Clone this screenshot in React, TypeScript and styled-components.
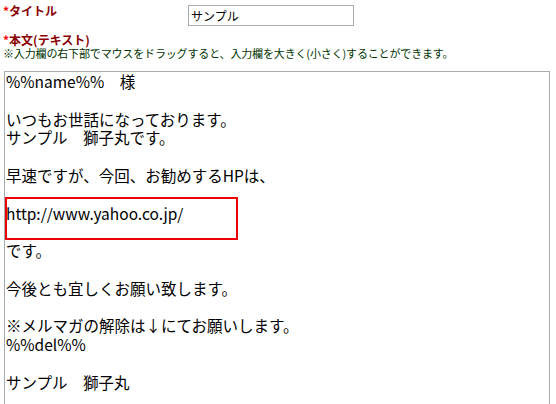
import { createGlobalStyle, styled } from 'styled-components';

const GlobalStyle = createGlobalStyle`
    html, body {
        margin: 0;
        padding: 0;
        background: #ffffff;
    }
    body {
        font-family: "Noto Sans CJK JP", "Noto Sans", sans-serif;
        overflow: hidden;
        height: 404px;
    }
`;

const Form = styled.div`
    padding: 4px 0 0 3px;
    width: 547px;
`;

const FieldRow = styled.div`
    display: grid;
    grid-template-columns: 185px 166px;
    align-items: start;
    height: 29px;
`;

const Label = styled.div`
    font-size: 12px;
    line-height: 14px;
    font-weight: bold;
    color: #8b0000;
    span {
        color: #ff0000;
    }
`;

const TitleInput = styled.input`
    box-sizing: border-box;
    width: 166px;
    height: 21px;
    margin-top: 1px;
    padding: 1px 2px;
    border: 1px solid #a5acb2;
    font-family: "Noto Sans CJK JP", sans-serif;
    font-size: 12px;
    color: #000;
    outline: none;
`;

const Note = styled.div`
    font-size: 11px;
    line-height: 13px;
    color: #003300;
    letter-spacing: -0.15px;
    white-space: nowrap;
`;

const EditorWrap = styled.div`
    position: relative;
    margin: 11px 0 0 1px;
`;

const BodyArea = styled.textarea`
    display: block;
    box-sizing: border-box;
    width: 546px;
    height: 334px;
    margin: 0;
    padding: 0 1px;
    border: 1px solid #a5acb2;
    font-family: "Noto Sans CJK JP", sans-serif;
    font-size: 15.5px;
    line-height: 18.8px;
    color: #000;
    resize: none;
    outline: none;
    overflow: hidden;
`;

// annotation box drawn over the url line
const Highlight = styled.div`
    position: absolute;
    left: 1px;
    top: 126px;
    width: 233px;
    height: 43px;
    box-sizing: border-box;
    border: 2px solid #ee0000;
    pointer-events: none;
`;

const bodyText = [
    '%%name%%　様',
    '',
    'いつもお世話になっております。',
    'サンプル　獅子丸です。',
    '',
    '早速ですが、今回、お勧めするHPは、',
    '',
    'http://www.yahoo.co.jp/',
    '',
    'です。',
    '',
    '今後とも宜しくお願い致します。',
    '',
    '※メルマガの解除は↓にてお願いします。',
    '%%del%%',
    '',
    'サンプル　獅子丸',
].join('\n');

const App = () => {
    return (
        <>
            <GlobalStyle />
            <Form>
                <FieldRow>
                    <Label>
                        <span>*</span>タイトル
                    </Label>
                    <TitleInput defaultValue="サンプル" />
                </FieldRow>
                <Label>
                    <span>*</span>本文(テキスト)
                </Label>
                <Note>
                    ※入力欄の右下部でマウスをドラッグすると、入力欄を大きく(小さく)することができます。
                </Note>
                <EditorWrap>
                    <BodyArea defaultValue={bodyText} spellCheck={false} />
                    <Highlight />
                </EditorWrap>
            </Form>
        </>
    );
};

export default App;
